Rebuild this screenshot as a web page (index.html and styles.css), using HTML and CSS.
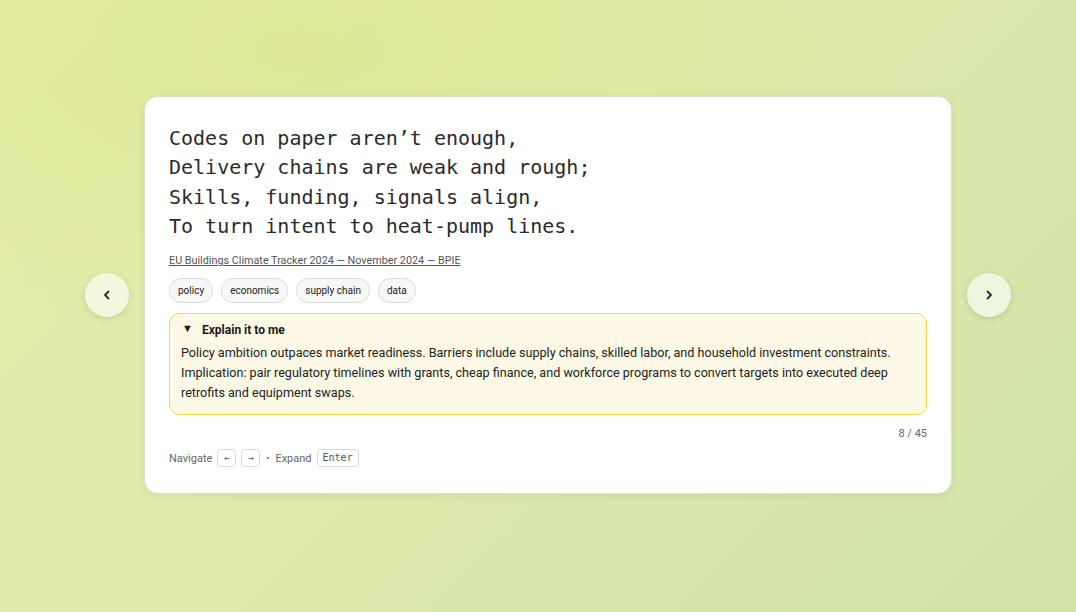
FILE: index.html
```html
<!DOCTYPE html>
<html>
<head>
<meta charset="utf-8">
<link rel="stylesheet" href="styles.css">
</head>
<body>
<div class="stage">
  <button class="nav nav-prev" aria-label="Previous">
    <svg width="12" height="12" viewBox="0 0 12 12"><path d="M7.5 2.5 L4 6 L7.5 9.5" fill="none" stroke="#2a2a2a" stroke-width="1.8" stroke-linecap="round" stroke-linejoin="round"/></svg>
  </button>
  <div class="card">
    <div class="poem">Codes on paper aren’t enough,<br>Delivery chains are weak and rough;<br>Skills, funding, signals align,<br>To turn intent to heat-pump lines.</div>
    <a class="source">EU Buildings Climate Tracker 2024 — November 2024 — BPIE</a>
    <div class="tags">
      <span class="tag">policy</span>
      <span class="tag">economics</span>
      <span class="tag">supply chain</span>
      <span class="tag">data</span>
    </div>
    <div class="explain">
      <div class="summary"><span class="tri">▼</span>Explain it to me</div>
      <p class="body">Policy ambition outpaces market readiness. Barriers include supply chains, skilled labor, and household investment constraints. Implication: pair regulatory timelines with grants, cheap finance, and workforce programs to convert targets into executed deep retrofits and equipment swaps.</p>
    </div>
    <div class="counter">8 / 45</div>
    <div class="hint">Navigate <kbd>←</kbd> <kbd>→</kbd> <span class="dot">•</span> Expand <kbd class="wide">Enter</kbd></div>
  </div>
  <button class="nav nav-next" aria-label="Next">
    <svg width="12" height="12" viewBox="0 0 12 12"><path d="M4.5 2.5 L8 6 L4.5 9.5" fill="none" stroke="#2a2a2a" stroke-width="1.8" stroke-linecap="round" stroke-linejoin="round"/></svg>
  </button>
</div>
</body>
</html>
```

FILE: styles.css
```css
html, body {
  margin: 0;
  padding: 0;
  height: 100%;
}
body {
  font-family: Roboto, "Liberation Sans", sans-serif;
  background:
    radial-gradient(ellipse 600px 300px at 28% 8%, rgba(222, 232, 150, 0.9), rgba(222, 232, 150, 0) 100%),
    linear-gradient(135deg, #e5eca9 0%, #dfe9ab 45%, #d0e4a8 100%);
  color: #1e1e1e;
}
.stage {
  height: 612px;
  box-sizing: border-box;
  padding: 0 0 22px 20px;
  display: flex;
  align-items: center;
  justify-content: center;
  gap: 15px;
}
.nav {
  width: 44px;
  height: 44px;
  border-radius: 50%;
  border: none;
  background: rgba(255, 255, 255, 0.62);
  box-shadow: 0 2px 6px rgba(0, 0, 0, 0.12);
  display: flex;
  align-items: center;
  justify-content: center;
  padding: 0;
  flex: none;
}
.card {
  width: 808px;
  box-sizing: border-box;
  background: #fff;
  border: 1px solid #dcdfd4;
  border-radius: 14px;
  padding: 27px 24px 26px 24px;
  box-shadow: 0 2px 8px rgba(0, 0, 0, 0.06);
}
.poem {
  font-family: "DejaVu Sans Mono", "Liberation Mono", monospace;
  font-size: 20px;
  line-height: 29.4px;
  color: #2b2b2b;
}
.source {
  display: block;
  margin-top: 13px;
  font-size: 10.8px;
  line-height: 14px;
  color: #555;
  text-decoration: underline;
}
.tags {
  display: flex;
  gap: 8px;
  margin-top: 10px;
}
.tag {
  font-size: 10px;
  line-height: 23px;
  padding: 0 8px;
  border: 1px solid #dcdcdc;
  border-radius: 12px;
  background: #f7f7f5;
  color: #222;
}
.explain {
  margin-top: 10px;
  background: #fef9e6;
  border: 1px solid #f1dc3c;
  border-radius: 10px;
  padding: 7px 11px 11px 11px;
}
.summary {
  font-size: 12px;
  font-weight: 700;
  line-height: 16px;
  color: #1a1a1a;
}
.tri {
  display: inline-block;
  font-size: 11px;
  width: 21px;
  padding-left: 1px;
  box-sizing: border-box;
  vertical-align: 2px;
}
.body {
  margin: 5px 0 0 0;
  font-size: 12.6px;
  line-height: 20px;
  color: #222;
}
.counter {
  text-align: right;
  font-size: 11px;
  color: #666;
  margin-top: 12px;
  line-height: 14px;
}
.hint {
  margin-top: 8px;
  font-size: 11px;
  color: #666;
  display: flex;
  align-items: center;
  gap: 5px;
}
.dot {
  font-size: 9px;
  padding: 0 1px;
}
kbd {
  font-family: "DejaVu Sans Mono", "Liberation Mono", monospace;
  font-size: 9px;
  line-height: 16px;
  min-width: 19px;
  box-sizing: border-box;
  text-align: center;
  border: 1px solid #d6d6d6;
  border-radius: 4px;
  color: #555;
  padding: 0 3px;
  background: #fff;
}
kbd.wide {
  font-size: 10px;
  padding: 0 5px;
}
```
